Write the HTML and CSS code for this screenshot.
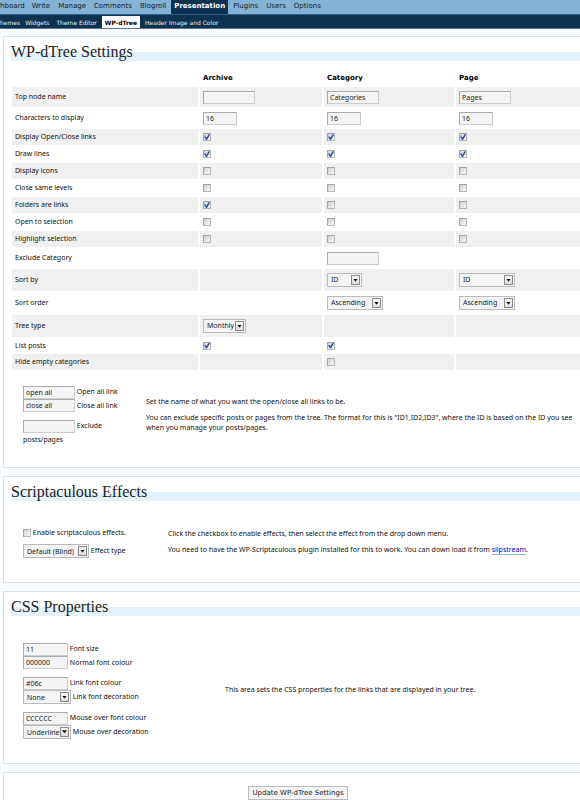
FILE: index.html
```html
<!DOCTYPE html>
<html lang="en">
<head>
<meta charset="utf-8">
<title>WP-dTree Settings</title>
<link rel="stylesheet" href="styles.css">
</head>
<body>
<nav class="menu" aria-label="Main">
  <a href="#">hboard</a>
  <a href="#">Write</a>
  <a href="#">Manage</a>
  <a href="#">Comments</a>
  <a href="#">Blogroll</a>
  <a href="#" class="current">Presentation</a>
  <a href="#">Plugins</a>
  <a href="#">Users</a>
  <a href="#">Options</a>
</nav>
<nav class="submenu" aria-label="Presentation">
  <a href="#">hemes</a>
  <a href="#">Widgets</a>
  <a href="#">Theme Editor</a>
  <a href="#" class="current">WP-dTree</a>
  <a href="#">Header Image and Color</a>
</nav>
<main>
  <form>
    <section class="panel">
      <h2>WP-dTree Settings</h2>
      <table class="options">
        <colgroup><col class="col-name"><col class="col-archive"><col class="col-category"><col></colgroup>
        <thead>
          <tr><td></td><th scope="col">Archive</th><th scope="col">Category</th><th scope="col">Page</th></tr>
        </thead>
        <tbody>
          <tr class="text-row"><th scope="row">Top node name</th>
            <td><input type="text" aria-label="Archive top node name"></td>
            <td><input type="text" value="Categories" aria-label="Category top node name"></td>
            <td><input type="text" value="Pages" aria-label="Page top node name"></td></tr>
          <tr class="text-row"><th scope="row">Characters to display</th>
            <td><input type="text" class="short" value="16" aria-label="Archive characters"></td>
            <td><input type="text" class="short" value="16" aria-label="Category characters"></td>
            <td><input type="text" class="short" value="16" aria-label="Page characters"></td></tr>
          <tr><th scope="row">Display Open/Close links</th>
            <td><input type="checkbox" checked aria-label="Archive open/close links"></td>
            <td><input type="checkbox" checked aria-label="Category open/close links"></td>
            <td><input type="checkbox" checked aria-label="Page open/close links"></td></tr>
          <tr><th scope="row">Draw lines</th>
            <td><input type="checkbox" checked aria-label="Archive draw lines"></td>
            <td><input type="checkbox" checked aria-label="Category draw lines"></td>
            <td><input type="checkbox" checked aria-label="Page draw lines"></td></tr>
          <tr><th scope="row">Display icons</th>
            <td><input type="checkbox" aria-label="Archive display icons"></td>
            <td><input type="checkbox" aria-label="Category display icons"></td>
            <td><input type="checkbox" aria-label="Page display icons"></td></tr>
          <tr><th scope="row">Close same levels</th>
            <td><input type="checkbox" aria-label="Archive close same levels"></td>
            <td><input type="checkbox" aria-label="Category close same levels"></td>
            <td><input type="checkbox" aria-label="Page close same levels"></td></tr>
          <tr><th scope="row">Folders are links</th>
            <td><input type="checkbox" checked aria-label="Archive folders are links"></td>
            <td><input type="checkbox" aria-label="Category folders are links"></td>
            <td><input type="checkbox" aria-label="Page folders are links"></td></tr>
          <tr><th scope="row">Open to selection</th>
            <td><input type="checkbox" aria-label="Archive open to selection"></td>
            <td><input type="checkbox" aria-label="Category open to selection"></td>
            <td><input type="checkbox" aria-label="Page open to selection"></td></tr>
          <tr><th scope="row">Highlight selection</th>
            <td><input type="checkbox" aria-label="Archive highlight selection"></td>
            <td><input type="checkbox" aria-label="Category highlight selection"></td>
            <td><input type="checkbox" aria-label="Page highlight selection"></td></tr>
          <tr class="text-row"><th scope="row">Exclude Category</th>
            <td></td>
            <td><input type="text" aria-label="Exclude category"></td>
            <td></td></tr>
          <tr class="select-row"><th scope="row">Sort by</th>
            <td></td>
            <td><span class="drop narrow"><select aria-label="Category sort by"><option>ID</option></select></span></td>
            <td><span class="drop wide"><select aria-label="Page sort by"><option>ID</option></select></span></td></tr>
          <tr class="select-row"><th scope="row">Sort order</th>
            <td></td>
            <td><span class="drop wide"><select aria-label="Category sort order"><option>Ascending</option></select></span></td>
            <td><span class="drop wide"><select aria-label="Page sort order"><option>Ascending</option></select></span></td></tr>
          <tr class="select-row"><th scope="row">Tree type</th>
            <td><span class="drop"><select aria-label="Archive tree type"><option>Monthly</option></select></span></td>
            <td></td>
            <td></td></tr>
          <tr><th scope="row">List posts</th>
            <td><input type="checkbox" checked aria-label="Archive list posts"></td>
            <td><input type="checkbox" checked aria-label="Category list posts"></td>
            <td></td></tr>
          <tr><th scope="row">Hide empty categories</th>
            <td></td>
            <td><input type="checkbox" aria-label="Category hide empty"></td>
            <td></td></tr>
        </tbody>
      </table>
      <div class="split split-links">
        <div class="fields">
          <div class="group">
            <div><input type="text" id="open-all" value="open all"> <label for="open-all">Open all link</label></div>
            <div><input type="text" id="close-all" value="close all"> <label for="close-all">Close all link</label></div>
          </div>
          <div class="group">
            <div><input type="text" id="exclude"> <label for="exclude">Exclude posts/pages</label></div>
          </div>
        </div>
        <div class="help">
          <p>Set the name of what you want the open/close all links to be.</p>
          <p>You can exclude specific posts or pages from the tree. The format for this is "ID1,ID2,ID3", where the ID is based on the ID you see when you manage your posts/pages.</p>
        </div>
      </div>
    </section>

    <section class="panel">
      <h2>Scriptaculous Effects</h2>
      <div class="split split-effects">
        <div class="fields">
          <div><input type="checkbox" id="effects"> <label for="effects">Enable scriptaculous effects.</label></div>
          <div><span class="drop effect"><select id="effect-type"><option>Default (Blind)</option></select></span> <label for="effect-type">Effect type</label></div>
        </div>
        <div class="help">
          <p>Click the checkbox to enable effects, then select the effect from the drop down menu.</p>
          <p>You need to have the WP-Scriptaculous plugin installed for this to work. You can down load it from <a href="#">silpstream</a>.</p>
        </div>
      </div>
    </section>

    <section class="panel">
      <h2>CSS Properties</h2>
      <div class="split split-css">
        <div class="fields">
          <div class="group">
            <div><input type="text" class="value" id="font-size" value="11"> <label for="font-size">Font size</label></div>
            <div><input type="text" class="value" id="font-colour" value="000000"> <label for="font-colour">Normal font colour</label></div>
          </div>
          <div class="group">
            <div><input type="text" class="value" id="link-colour" value="#06c"> <label for="link-colour">Link font colour</label></div>
            <div><span class="drop decoration"><select id="link-decoration"><option>None</option></select></span> <label for="link-decoration">Link font decoration</label></div>
          </div>
          <div class="group">
            <div><input type="text" class="value" id="hover-colour" value="CCCCCC"> <label for="hover-colour">Mouse over font colour</label></div>
            <div><span class="drop decoration"><select id="hover-decoration"><option>Underline</option></select></span> <label for="hover-decoration">Mouse over decoration</label></div>
          </div>
        </div>
        <div class="help">
          <p>This area sets the CSS properties for the links that are displayed in your tree.</p>
        </div>
      </div>
    </section>

    <section class="panel submit">
      <button type="submit">Update WP-dTree Settings</button>
    </section>
  </form>
</main>
</body>
</html>
```

FILE: styles.css
```css
*,
*::before,
*::after {
  box-sizing: border-box;
}

body {
  margin: 0;
  overflow-x: clip;
  background: #f8fcff;
  color: #111;
  font: 7px/10px "Noto Sans", "Open Sans", sans-serif;
}

/* Navigation */
.menu,
.submenu {
  display: flex;
  overflow: hidden;
  white-space: nowrap;
  font-family: "DejaVu Sans", sans-serif;
}

.menu a,
.submenu a {
  flex: none;
  padding: 0 3px;
  text-decoration: none;
}

.menu {
  gap: 2px;
  height: 15px;
  border-bottom: 1px solid #2d5f85;
  background: #83b4d8;
  line-height: 13px;
}

.menu a {
  color: #1a1a1a;
}

.menu a:first-child {
  padding: 0 2px 0 0;
}

.menu .current {
  height: 15px;
  background: #0d324f;
  color: #fff;
  font-weight: bold;
}

.submenu {
  gap: 3px;
  height: 14px;
  border-bottom: 1px solid #5c7893;
  background: #0d324f;
  font-size: 6px;
  line-height: 15px;
}

.submenu a {
  padding: 0 2px;
  color: #e6eef5;
}

.submenu a:first-child {
  padding: 0;
}

.submenu .current {
  margin-top: 1px;
  padding: 0 3px;
  background: #fff;
  color: #000;
  font-weight: bold;
  line-height: 13px;
}

/* Panels */
main {
  margin: 7px -13px 0 3px;
}

.panel {
  margin-bottom: 8px;
  padding: 5px 7px 21px;
  border: 1px solid #dce2e4;
  background: #fff;
}

h2 {
  margin: 0;
  background: linear-gradient(#e4f2fd, #e4f2fd) bottom / 100% 9px no-repeat;
  color: #222;
  font: 16px/19px "Liberation Serif", serif;
}

/* Controls */
input,
select,
button {
  margin: 0;
  border: 1px solid #bbb;
  border-radius: 0;
  background: #f4f4f4;
  color: #222;
  font: inherit;
  appearance: none;
}

input[type="text"] {
  width: 52px;
  height: 13px;
  padding: 0 2px;
  border-color: #aaa #ccc #ccc #aaa;
  vertical-align: middle;
}

input[type="text"].short {
  width: 34px;
}

input[type="text"].value {
  width: 45px;
}

input[type="checkbox"] {
  display: inline-grid;
  width: 8px;
  height: 8px;
  border-color: #a4a4a4 #b8b8b8 #b8b8b8 #a4a4a4;
  background: linear-gradient(135deg, #ccd0d4, #fafafa);
  vertical-align: middle;
}

input[type="checkbox"]:checked::before {
  content: "";
  background: #2f4fa8;
  clip-path: polygon(0 45%, 20% 35%, 40% 60%, 80% 0, 100% 10%, 50% 100%, 35% 100%);
}

.drop {
  display: inline-grid;
  width: 43px;
  vertical-align: middle;
}

.drop.narrow {
  width: 35px;
}

.drop.wide {
  width: 56px;
}

.drop.effect {
  width: 66px;
}

.drop.decoration {
  width: 48px;
}

.drop select,
.drop::before,
.drop::after {
  grid-area: 1 / 1;
}

.drop select {
  width: 100%;
  height: 14px;
  padding: 0 0 0 3px;
}

.drop::before,
.drop::after {
  content: "";
  z-index: 1;
  align-self: center;
  justify-self: end;
  pointer-events: none;
}

.drop::before {
  width: 9px;
  height: 10px;
  margin-right: 2px;
  border: 1px solid #8c8c8c;
  background: linear-gradient(#fafafa, #dcdcdc);
}

.drop::after {
  width: 5px;
  height: 3px;
  margin-right: 4px;
  background: #000;
  clip-path: polygon(0 0, 100% 0, 50% 100%);
}

/* Options table */
.options {
  width: 100%;
  margin-top: 8px;
  margin-left: -1px;
  border-spacing: 2px 1px;
  table-layout: fixed;
}

.col-name {
  width: 186px;
}

.col-archive {
  width: 122px;
}

.col-category {
  width: 130px;
}

.options th,
.options td {
  height: 16px;
  padding: 0 3px;
  line-height: 8px;
  text-align: left;
  vertical-align: middle;
}

.options thead th {
  color: #000;
  font-family: "DejaVu Sans", sans-serif;
}

.options tbody th {
  font-weight: normal;
}

.options tbody tr:nth-child(odd) > * {
  background: #f0f0f0;
}

.options tbody tr:nth-last-child(2) > * {
  height: 15px;
}

.options tbody tr.text-row > * {
  height: 20px;
}

.options tbody tr.select-row > * {
  height: 22px;
}

/* Field groups with help text */
.split {
  display: grid;
  align-items: center;
  padding-left: 12px;
}

.split-links {
  grid-template-columns: 100px 1fr;
  gap: 23px;
  margin-top: 14px;
}

.split-effects {
  grid-template-columns: 122px 1fr;
  gap: 23px;
  margin-top: 25px;
  padding-bottom: 3px;
}

.split-css {
  grid-template-columns: 179px 1fr;
  gap: 23px;
  margin-top: 26px;
  padding-bottom: 3px;
}

.fields {
  line-height: 13px;
}

.group + .group {
  margin-top: 7px;
}

.split-effects .fields {
  display: grid;
  gap: 5px;
}

.help {
  padding-right: 11px;
}

.help p {
  margin: 0;
}

.help p + p {
  margin-top: 6px;
}

.help a {
  border-bottom: 1px solid #8fb4dc;
  color: #00c;
  text-decoration: none;
}

.submit {
  margin-bottom: 0;
  padding: 13px 0 0;
  border-bottom: 0;
  text-align: center;
}

.submit button {
  display: block;
  height: 14px;
  margin: 0 auto 1px;
  padding: 0 3px;
  font-family: "DejaVu Sans", sans-serif;
  line-height: 10px;
}
```
